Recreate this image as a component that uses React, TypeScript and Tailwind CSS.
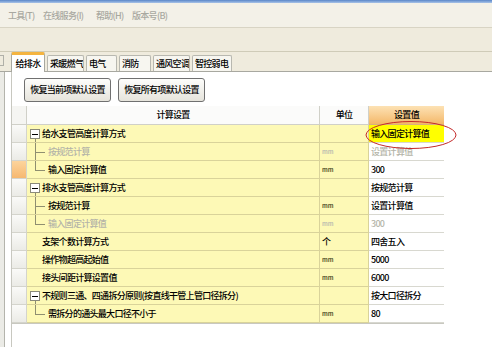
import React from "react";

interface Row {
  label: string;
  type: "parent" | "child" | "last" | "plain";
  unit: string;
  value: string;
  disabled?: boolean;
  selected?: boolean;
  hl?: boolean;
}

const rows: Row[] = [
  { label: "给水支管高度计算方式", type: "parent", unit: "", value: "输入固定计算值", hl: true },
  { label: "按规范计算", type: "child", unit: "mm", value: "设置计算值", disabled: true },
  { label: "输入固定计算值", type: "last", unit: "mm", value: "300", selected: true },
  { label: "排水支管高度计算方式", type: "parent", unit: "", value: "按规范计算" },
  { label: "按规范计算", type: "child", unit: "mm", value: "设置计算值" },
  { label: "输入固定计算值", type: "last", unit: "mm", value: "300", disabled: true },
  { label: "支架个数计算方式", type: "plain", unit: "个", value: "四舍五入" },
  { label: "操作物超高起始值", type: "plain", unit: "mm", value: "5000" },
  { label: "接头间距计算设置值", type: "plain", unit: "mm", value: "6000" },
  { label: "不规则三通、四通拆分原则(按直线干管上管口径拆分)", type: "parent", unit: "", value: "按大口径拆分" },
  { label: "需拆分的通头最大口径不小于", type: "last", unit: "mm", value: "80" },
];

const tabs = [
  { name: "给排水", w: "w-[34px]" },
  { name: "采暖燃气", w: "w-[37px]" },
  { name: "电气", w: "w-[31px]" },
  { name: "消防", w: "w-[32px]" },
  { name: "通风空调", w: "w-[37px]" },
  { name: "智控弱电", w: "w-[40px]" },
];

const TreeGutter: React.FC<{ type: Row["type"] }> = ({ type }) => {
  if (type === "plain") return <div className="w-[15px] shrink-0" />;
  if (type === "parent")
    return (
      <div className="w-[15px] h-full shrink-0 relative">
        <div className="absolute left-[3px] top-[4px] w-[10px] h-[10px] border border-[#8a8a7a] bg-white flex items-center justify-center">
          <div className="w-[6px] h-px bg-black" />
        </div>
        <div className="absolute left-[8px] top-[14px] bottom-0 w-px bg-[#8f8f70]" />
      </div>
    );
  return (
    <div className="w-[21px] h-full shrink-0 relative">
      <div
        className={
          type === "last"
            ? "absolute left-[8px] top-0 h-[9px] w-px bg-[#8f8f70]"
            : "absolute left-[8px] top-0 bottom-0 w-px bg-[#8f8f70]"
        }
      />
      <div className="absolute left-[8px] top-[9px] w-[10px] h-px bg-[#8f8f70]" />
    </div>
  );
};

const App: React.FC = () => {
  return (
    <div
      className="w-[492px] h-[347px] bg-white relative overflow-hidden flex flex-col text-[9px] tracking-[-0.7px] font-medium text-black"
      style={{ fontFamily: '"Noto Sans CJK SC", "Noto Sans", sans-serif' }}
    >
      {/* window title edge */}
      <div className="h-[3px] shrink-0 bg-gradient-to-b from-[#5a86c8] to-[#a9c4e8]" />
      {/* menu bar */}
      <div className="h-[25px] shrink-0 bg-[#f3f1e8] flex items-center pl-[8px] pt-[2px] text-[#a8a8a0] border-b border-[#d8d4c4] whitespace-nowrap">
        <span className="w-[35px]">工具(T)</span>
        <span className="w-[53px]">在线服务(I)</span>
        <span className="w-[36px]">帮助(H)</span>
        <span>版本号(B)</span>
      </div>
      {/* tool bar */}
      <div className="h-[24px] shrink-0 bg-[#efebdd] border-b border-[#cfcbb8]" />
      {/* tab strip */}
      <div className="h-[20px] shrink-0 bg-[#efebdd] border-b border-[#a8a8a0] flex items-end pl-[11px] gap-[2px] relative whitespace-nowrap">
        <div className="absolute left-0 top-[3px] w-[4px] h-[11px] border border-[#b0b0a8] border-l-0" />
        {tabs.map((t, i) =>
          i === 0 ? (
            <div
              key={t.name}
              className={`${t.w} h-[20px] -mb-px bg-white border border-b-0 border-[#a8a8a0] border-t-[3px] border-t-[#f4b440] rounded-t-[2px] flex items-center justify-center`}
            >
              {t.name}
            </div>
          ) : (
            <div
              key={t.name}
              className={`${t.w} h-[16px] bg-[#f7f6f0] border border-b-0 border-[#b8b8b0] rounded-t-[2px] flex items-center pl-[2px] overflow-hidden`}
            >
              {t.name}
            </div>
          )
        )}
      </div>
      {/* body */}
      <div className="flex flex-1">
        <div className="w-[12px] shrink-0 flex">
          <div className="w-[4px] bg-[#ebebe6]" />
          <div className="w-px bg-[#b4b4ac]" />
          <div className="flex-1 bg-white border-r border-[#c8c8c0]" />
        </div>
        <div className="flex flex-col">
          <div className="h-[34px] flex items-center gap-[7px] pl-[12px] pt-[1px]">
            <button className="w-[87px] h-[24px] rounded-[3px] border border-[#707070] bg-gradient-to-b from-[#fdfdfb] to-[#e6e4dc] flex items-center justify-center">
              恢复当前项默认设置
            </button>
            <button className="w-[87px] h-[24px] rounded-[3px] border border-[#707070] bg-gradient-to-b from-[#fdfdfb] to-[#e6e4dc] flex items-center justify-center">
              恢复所有项默认设置
            </button>
          </div>
          <div className="relative w-[432px] border-r border-b border-[#c8c8c0]">
            <div className="grid grid-cols-[15px_293px_49px_75px]">
              <div className="h-[19px] bg-[#f5f5f2] border-r border-b border-[#d0d0c8]" />
              <div className="h-[19px] bg-[#fbfbfa] border-r border-b border-[#d0d0c8] flex items-center justify-center">
                计算设置
              </div>
              <div className="h-[19px] bg-[#fbfbfa] border-r border-b border-[#d0d0c8] flex items-center justify-center">
                单位
              </div>
              <div className="h-[19px] bg-gradient-to-b from-[#fde2b4] to-[#f3b868] border-b border-[#d8b080] flex items-center justify-center">
                设置值
              </div>
              {rows.map((r, i) => {
                const dim = r.disabled ? "text-[#b4b4a8]" : "text-black";
                return (
                  <React.Fragment key={i}>
                    <div
                      className={`h-[18px] border-r border-b border-[#d4d4cc] ${
                        r.selected ? "bg-gradient-to-b from-[#fcd49c] to-[#f6b870]" : "bg-gradient-to-b from-[#fafaf8] to-[#ebebe6]"
                      }`}
                    />
                    <div className={`h-[18px] bg-[#fdf9b6] border-r border-b border-[#d9d39a] flex items-center whitespace-nowrap ${dim}`}>
                      <TreeGutter type={r.type} />
                      <span>{r.label}</span>
                    </div>
                    <div className={`h-[18px] bg-[#fdf9b6] border-r border-b border-[#d9d39a] flex items-center pl-[2px] ${dim}`}>
                      {r.unit === "mm" ? (
                        <span className={`text-[6px] font-bold tracking-normal ${r.disabled ? "text-[#c0c0b0]" : "text-[#5a5a30]"}`}>mm</span>
                      ) : (
                        r.unit
                      )}
                    </div>
                    <div className={`h-[18px] border-b border-[#d8d8d0] flex items-center pl-[2px] whitespace-nowrap ${r.hl ? "bg-[#ffff00]" : "bg-white"} ${dim}`}>
                      {r.value}
                    </div>
                  </React.Fragment>
                );
              })}
            </div>
            <svg className="absolute left-[353px] top-[14px]" width="92" height="30" viewBox="0 0 92 30">
              <ellipse cx="46" cy="15" rx="45" ry="13.5" fill="none" stroke="#c42a2a" strokeWidth="1" />
            </svg>
          </div>
        </div>
      </div>
    </div>
  );
};

export default App;
